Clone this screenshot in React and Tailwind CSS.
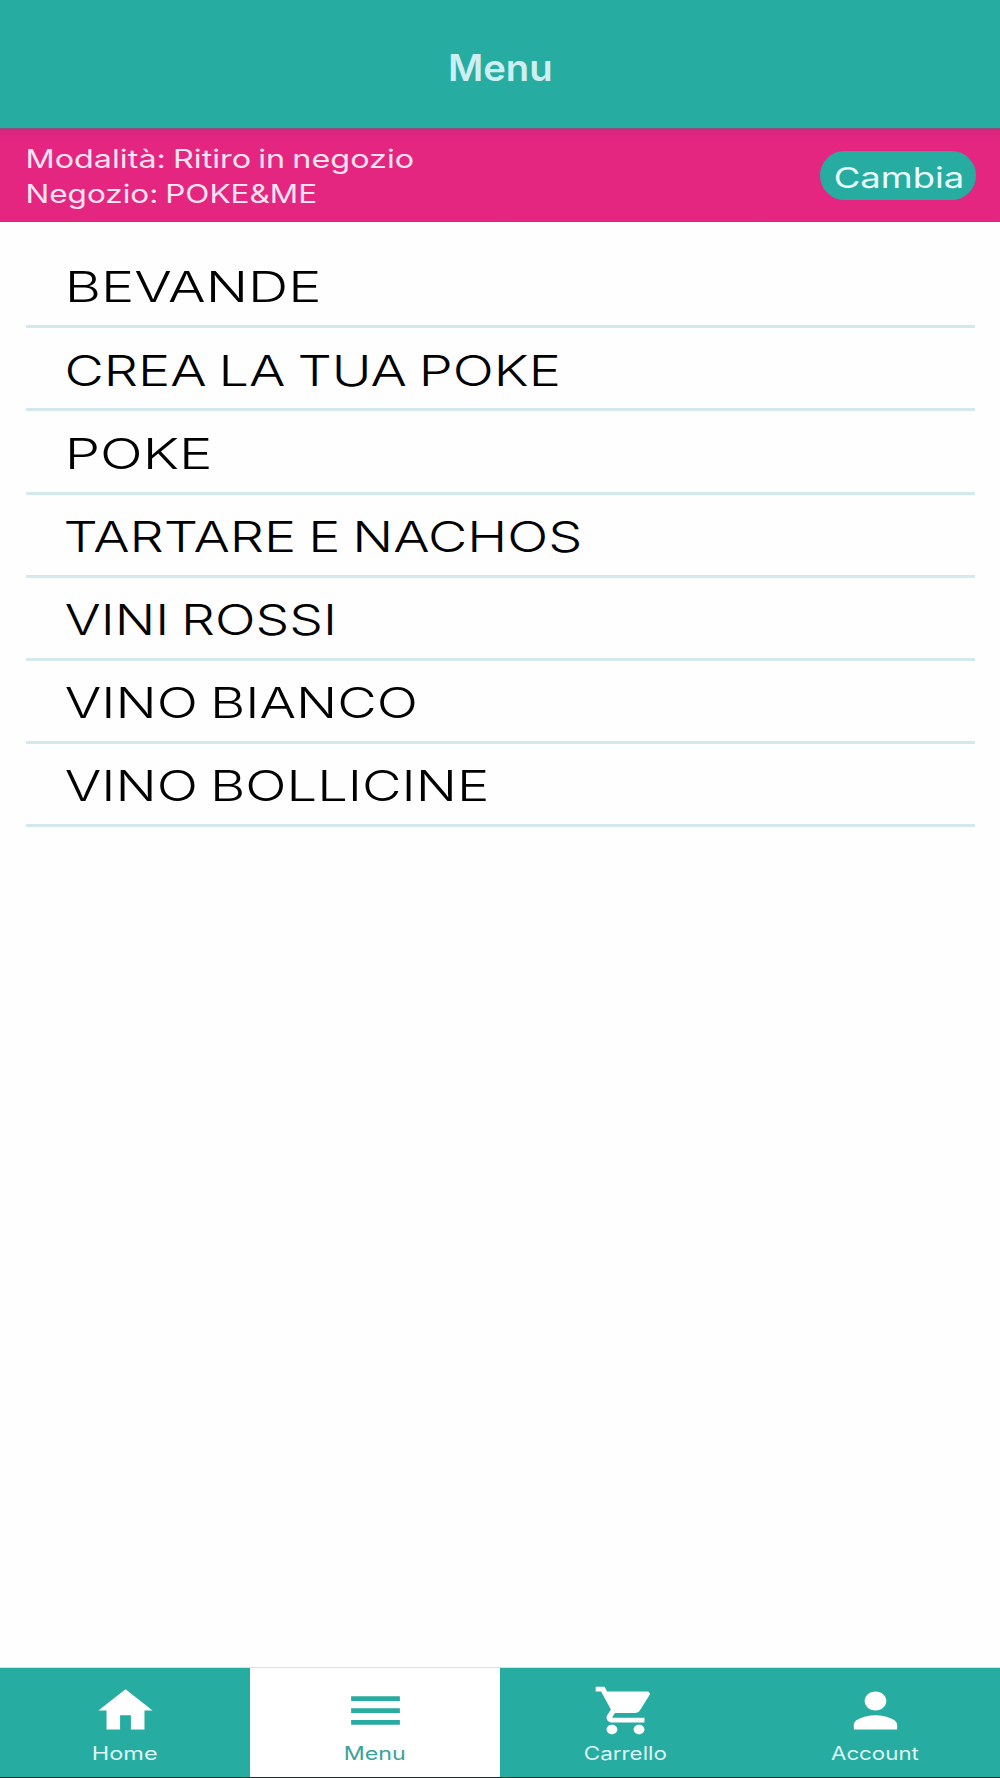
import { useRef, useState, useLayoutEffect } from 'react'
import { MdHome, MdMenu, MdShoppingCart, MdPerson } from 'react-icons/md'

const CATEGORIES = [
  { name: 'BEVANDE',          left: 69.5, width: 248.5 },
  { name: 'CREA LA TUA POKE', left: 67,   width: 491 },
  { name: 'POKE',             left: 69.5, width: 139.5 },
  { name: 'TARTARE E NACHOS', left: 65.5, width: 514 },
  { name: 'VINI ROSSI',       left: 65.5, width: 267 },
  { name: 'VINO BIANCO',      left: 65.5, width: 349 },
  { name: 'VINO BOLLICINE',   left: 65.5, width: 420.5 },
]

const TABS = [
  { label: 'Home',     Icon: MdHome,         width: 64 },
  { label: 'Menu',     Icon: MdMenu,         width: 60, active: true },
  { label: 'Carrello', Icon: MdShoppingCart, width: 81 },
  { label: 'Account',  Icon: MdPerson,       width: 88 },
]

// Widens a line of text so that its glyphs span exactly `width` pixels
function WideText({ children, width, className = '' }) {
  const ref = useRef(null)
  const [transform, setTransform] = useState('none')

  useLayoutEffect(() => {
    const cs  = getComputedStyle(ref.current)
    const ctx = document.createElement('canvas').getContext('2d')
    ctx.font = `${cs.fontWeight} ${cs.fontSize} ${cs.fontFamily}`
    ctx.wordSpacing = cs.wordSpacing
    const m     = ctx.measureText(children)
    const scale = width / (m.actualBoundingBoxRight + m.actualBoundingBoxLeft)
    setTransform(`translateX(${m.actualBoundingBoxLeft * scale}px) scaleX(${scale})`)
  }, [children, width])

  return (
    <span className={`block text-left whitespace-nowrap ${className}`} style={{ width }}>
      <span ref={ref} className="inline-block origin-left" style={{ transform }}>
        {children}
      </span>
    </span>
  )
}

function Header() {
  return (
    <header className="flex h-[128px] shrink-0 items-center justify-center bg-[#27aca1] pt-[7px]">
      <h1 className="text-[37px] leading-none font-semibold text-[#cdeff2]">
        <WideText width={101}>Menu</WideText>
      </h1>
    </header>
  )
}

function StoreBar() {
  return (
    <div className="flex h-[94px] shrink-0 items-start justify-between border-t border-b border-t-[#8b4f7f] border-b-[#b83a78] bg-[#e42681] bg-linear-to-b from-[#d8247a] to-[#e42681] to-12% pr-6 pl-[28px]">
      <div className="pt-[13px] text-[25.5px] leading-[34.7px] text-[#fbe3f0] [word-spacing:-0.06em]">
        <WideText width={384.5}>Modalità: Ritiro in negozio</WideText>
        <WideText width={287.5}>Negozio: POKE&amp;ME</WideText>
      </div>
      <button className="mt-[22px] flex h-[49px] w-[156px] items-center justify-center rounded-full bg-[#27aca1] pt-1 text-[28px] leading-none text-[#e9fbfa]">
        <WideText width={127}>Cambia</WideText>
      </button>
    </div>
  )
}

function CategoryList() {
  return (
    <ul className="flex-1 pt-[23px] pr-[25px] pl-[26px]">
      {CATEGORIES.map(({ name, left, width }) => (
        <li
          key={name}
          className="flex h-[83.2px] items-center border-b-3 border-[#d3e9ec] pt-[5px] text-[42.5px] leading-none font-light text-black [word-spacing:-0.06em]"
        >
          <div style={{ marginLeft: left - 26 }}>
            <WideText width={width}>{name}</WideText>
          </div>
        </li>
      ))}
    </ul>
  )
}

function TabBar() {
  return (
    <nav className="grid h-[111px] shrink-0 grid-cols-4 border-t border-b border-t-[#dcdfdf] border-b-[#1d2b2a]">
      {TABS.map(({ label, Icon, width, active }) => (
        <a
          key={label}
          className={`flex flex-col items-center pt-[14px] ${
            active ? 'bg-white text-[#27aca1]' : 'bg-[#27aca1] text-white'
          }`}
        >
          <Icon preserveAspectRatio="none" className="h-[57px] w-[65px]" />
          <WideText
            width={width}
            className={`mt-[4px] text-[18px] leading-[22px] ${active ? 'text-[#3aa39b]' : 'text-[#dcf5f3]'}`}
          >
            {label}
          </WideText>
        </a>
      ))}
    </nav>
  )
}

export default function App() {
  return (
    <div className="flex h-[1778px] w-[1000px] flex-col overflow-hidden bg-[#fefefe] font-['Inter','Liberation_Sans',sans-serif]">
      <Header />
      <StoreBar />
      <CategoryList />
      <TabBar />
    </div>
  )
}
